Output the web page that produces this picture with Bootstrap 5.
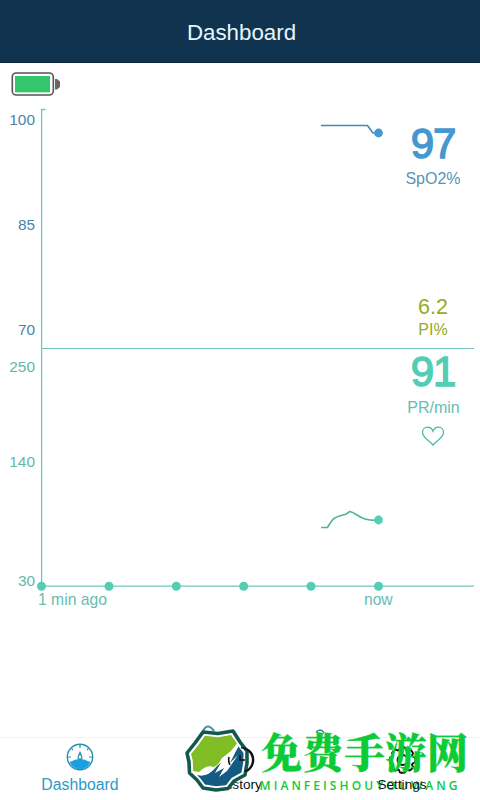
<!DOCTYPE html>
<html lang="en">
<head>
    <meta charset="UTF-8">
    <meta name="viewport" content="width=device-width, initial-scale=1.0">
    <title>Dashboard</title>
    <link href="https://cdn.jsdelivr.net/npm/bootstrap@5.3.0/dist/css/bootstrap.min.css" rel="stylesheet">
    <style>
        body {
            font-family: "Liberation Sans", Arial, sans-serif;
            height: 800px;
            overflow: hidden;
            background: #fff;
        }
        .app-header {
            height: 63px;
            background: #10344f;
            color: #e8f6fb;
            font-size: 22.3px;
            border-bottom: 1px solid #0a2338;
            padding-left: 3px;
        }
        .status-row { height: 46px; padding: 8px 0 0 11px; }
        .panel { height: 239px; }
        .panel-pr { height: 237px; }
        .axis { width: 41px; padding-right: 6px; font-size: 15.4px; line-height: 18px; }
        .axis-spo2 { color: #4784ad; padding-top: 2px; padding-bottom: 9px; }
        .axis-pr { color: #5fb9a8; padding-top: 9px; }
        .tick-mid { margin-top: 77px; }
        .tick-low { margin-top: 101px; }
        .plot { width: 352px; }
        .plot svg { overflow: visible; display: block; }
        .readout { width: 80px; font-size: 16px; line-height: 18px; }
        .panel-line { height: 1px; width: 433px; margin-left: 41px; background: #72c5bd; }
        .big-value { font-size: 42px; line-height: 42px; letter-spacing: -1px; -webkit-text-stroke: 1.4px currentColor; }
        .spo2 { color: #4598cf; margin-top: 14px; }
        .spo2-label { color: #5594b8; margin-top: 5px; }
        .pi { color: #93ac26; margin-top: 4px; }
        .pi-value { color: #93ac26; margin-top: 109px; font-size: 21.5px; line-height: 20px; }
        .pr { color: #55cdb5; margin-top: 2px; }
        .pr-label { color: #68bdb0; margin-top: 6px; padding-left: 1px; }
        .heart { margin-top: 9px; }
        .time-row { height: 151px; padding: 5px 0 0 38px; font-size: 15.7px; line-height: 18px; color: #68bdb0; }
        .now-label { margin-left: 257px; }
        .tabs { height: 63px; border-top: 1px solid #f3f3f3; font-size: 13.6px; line-height: 16px; color: #111; }
        .tab { width: 160px; padding-top: 5px; }
        .tab-active { color: #2a9ac6; font-size: 15.8px; }
        .tab-label { margin-top: 6px; }
        .tab-front { z-index: 2; padding: 39px 0 0 4px; }
        .site-mark { left: 180px; top: 720px; z-index: 1; }
        .mark-cn { font-family: "Noto Serif CJK SC", "Noto Sans CJK SC", serif; font-weight: 900; font-size: 41px; }
        .mark-en { font-family: "Open Sans", sans-serif; font-weight: 600; font-size: 12px; }
    </style>
</head>
<body class="d-flex flex-column position-relative">
    <header class="app-header d-flex align-items-center justify-content-center flex-shrink-0 pt-1">Dashboard</header>

    <!-- Battery -->
    <div class="status-row flex-shrink-0">
        <svg class="d-block" width="50" height="26" viewBox="0 0 50 26">
            <rect x="1.3" y="2" width="41" height="22" rx="4" fill="#fff" stroke="#555" stroke-width="1.6"/>
            <rect x="4" y="5" width="35" height="16.3" fill="#32c76c"/>
            <path d="M44 8h2l3 2.5v5.5l-3 2.5h-2z" fill="#666"/>
        </svg>
    </div>

    <!-- SpO2 chart -->
    <section class="panel d-flex flex-shrink-0">
        <div class="axis axis-spo2 d-flex flex-column justify-content-between text-end">
            <span>100</span><span>85</span><span>70</span>
        </div>
        <div class="plot">
            <svg width="352" height="239" viewBox="41 109 352 239">
                <path d="M41.6 109v239M41.6 109.5h4" fill="none" stroke="#72c5bd" stroke-width="1.3"/>
                <path d="M321 125.5h46.500l5.500 7.500h5" fill="none" stroke="#4089b0" stroke-width="1.6"/>
                <circle cx="378.5" cy="133" r="4.4" fill="#4598cf"/>
            </svg>
        </div>
        <div class="readout d-flex flex-column align-items-center">
            <span class="big-value spo2">97</span>
            <span class="spo2-label">SpO2%</span>
            <span class="pi-value">6.2</span>
            <span class="pi">PI%</span>
        </div>
    </section>
    <div class="panel-line flex-shrink-0"></div>

    <!-- Pulse rate chart -->
    <section class="panel panel-pr d-flex flex-shrink-0">
        <div class="axis axis-pr d-flex flex-column text-end">
            <span>250</span><span class="tick-mid">140</span><span class="tick-low">30</span>
        </div>
        <div class="plot">
            <svg width="352" height="237" viewBox="41 349 352 237">
                <path d="M41.600 348v238" stroke="#72c5bd" stroke-width="1.3"/>
                <path d="M321 527.5h6.500c2-3 3.500-7 6.500-9s8-3 11-4 3-2.300 5-3c5 1 9 6 15 7.500 4 1.200 8 1.200 12 1.200" fill="none" stroke="#4cb59d" stroke-width="1.6"/>
                <circle cx="378.5" cy="520" r="4.4" fill="#55cdb5"/>
                <path d="M41 586.2h433" stroke="#72c5bd" stroke-width="1.3"/>
                <g fill="#55cdb5">
                    <circle cx="41.5" cy="586.3" r="4.5"/>
                    <circle cx="109" cy="586.3" r="4.5"/>
                    <circle cx="176.3" cy="586.3" r="4.5"/>
                    <circle cx="243.7" cy="586.3" r="4.5"/>
                    <circle cx="311" cy="586.3" r="4.5"/>
                    <circle cx="378.5" cy="586.3" r="4.5"/>
                </g>
            </svg>
        </div>
        <div class="readout d-flex flex-column align-items-center">
            <span class="big-value pr">91</span>
            <span class="pr-label">PR/min</span>
            <svg class="heart d-block" width="24" height="20" viewBox="0 0 24 20">
                <path d="M12 19C9 15.500 1.500 11.500 1.500 6.500 1.500 3.500 3.700 1.200 6.500 1.200c2.700 0 4.500 1.500 5.500 4 1-2.500 2.800-4 5.500-4 2.800 0 5 2.300 5 5.300 0 5-7.500 9-10.500 12.500z" fill="none" stroke="#4cb8a6" stroke-width="1.3"/>
            </svg>
        </div>
    </section>
    <div class="time-row flex-shrink-0 d-flex">
        <span>1 min ago</span><span class="now-label">now</span>
    </div>

    <!-- Watermark badge -->
    <svg class="site-mark position-absolute" width="300" height="80" viewBox="180 720 300 80">
        <defs>
            <path id="tooth" d="M-3.83-9.240-2.600-12.300Q0-13.300 2.600-12.300L3.830-9.240"/>
        </defs>
        <path d="M203 731q4.500-9 11 0" fill="none" stroke="#4b93ae" stroke-width="2.2"/>
        <path d="M316 732.5q4-5 8 0" fill="none" stroke="#3e79a8" stroke-width="1.5"/>
        <circle cx="241" cy="760" r="12.5" fill="none" stroke="#111" stroke-width="1.7"/>
        <text x="219.5" y="789" font-size="13.6" fill="#111">History</text>
        <path d="M203 732 218 733.500 233 731 240 742 247 751 247 763 245 775 234 781 228 788.500 216 790 203 788 197 780 189.500 773 189 762 187 753 195 743Z" fill="#fff" stroke="#11594f" stroke-width="3.6" stroke-linejoin="round"/>
        <path d="M205 735.800 218 737.200 231 735 237 743.500 231 751 222 758 216 768Q208 763 199 772L193.200 771 192.700 760 191 754 198 745.500Z" fill="#80bd27"/>
        <path d="M197 775Q207 777 214 769L229 755 223 768 238.500 746.500 243.500 753 243.300 762 241.500 772.500 231.500 778 226 785.200 216 786.300 205 784.500 200 778Z" fill="#145b83"/>
        <path d="M194 774q10 4 17-5l9-6 8-8 11-10-9 18 8-8-11 16-8 6 5-9-9 5 8-14-8 9q-9 11-21 6z" fill="#fff"/>
        <g fill="none" stroke="#111" stroke-width="1.6">
            <path d="M241 747.500a12.500 12.500 0 0 1 4 24M240 755v5h5M229 757q-1 4 1 8"/>
            <g stroke-width="1.9">
                <use href="#tooth" transform="translate(402.500 760)"/>
                <use href="#tooth" transform="translate(402.500 760) rotate(45)"/>
                <use href="#tooth" transform="translate(402.500 760) rotate(90)"/>
                <use href="#tooth" transform="translate(402.500 760) rotate(135)"/>
                <use href="#tooth" transform="translate(402.500 760) rotate(180)"/>
                <use href="#tooth" transform="translate(402.500 760) rotate(225)"/>
                <use href="#tooth" transform="translate(402.500 760) rotate(270)"/>
                <use href="#tooth" transform="translate(402.500 760) rotate(315)"/>
                <circle cx="402.5" cy="760" r="5"/>
            </g>
        </g>
        <g fill="#0ccb37">
            <text class="mark-cn" x="261" y="768" textLength="207" stroke="#0ccb37" stroke-width=".3">免费手游网</text>
            <text class="mark-en" x="259.5" y="789.5" textLength="198">MIANFEISHOUYOUWANG</text>
        </g>
    </svg>

    <nav class="tabs d-flex flex-shrink-0">
        <div class="tab tab-active d-flex flex-column align-items-center">
            <svg class="d-block" width="28" height="28" viewBox="0 0 28 28">
                <path d="M3.500 19q3-1 5.500-2.200 5-1.500 10 0 2 1.200 5.500 2.200Q21 26 14 26.500 7 26 3.500 19z" fill="#1a9fe3"/>
                <circle cx="14" cy="14" r="12.7" fill="none" stroke="#238fb5" stroke-width="1.4"/>
                <path d="M14 2v3M2 14h3M23 14h3M5.500 5.500l1.500 1.500M22.500 5.500 21 7" stroke="#238fb5" stroke-width="1.2"/>
                <path d="M14 9.500l-1.700 4a1.900 1.900 0 1 0 3.400 0z" fill="none" stroke="#238fb5" stroke-width="1.3"/>
            </svg>
            <span class="tab-label">Dashboard</span>
        </div>
        <div class="tab"></div>
        <div class="tab tab-front position-relative text-center">Settings</div>
    </nav>
    <script src="https://cdn.jsdelivr.net/npm/bootstrap@5.3.0/dist/js/bootstrap.bundle.min.js"></script>
</body>
</html>
